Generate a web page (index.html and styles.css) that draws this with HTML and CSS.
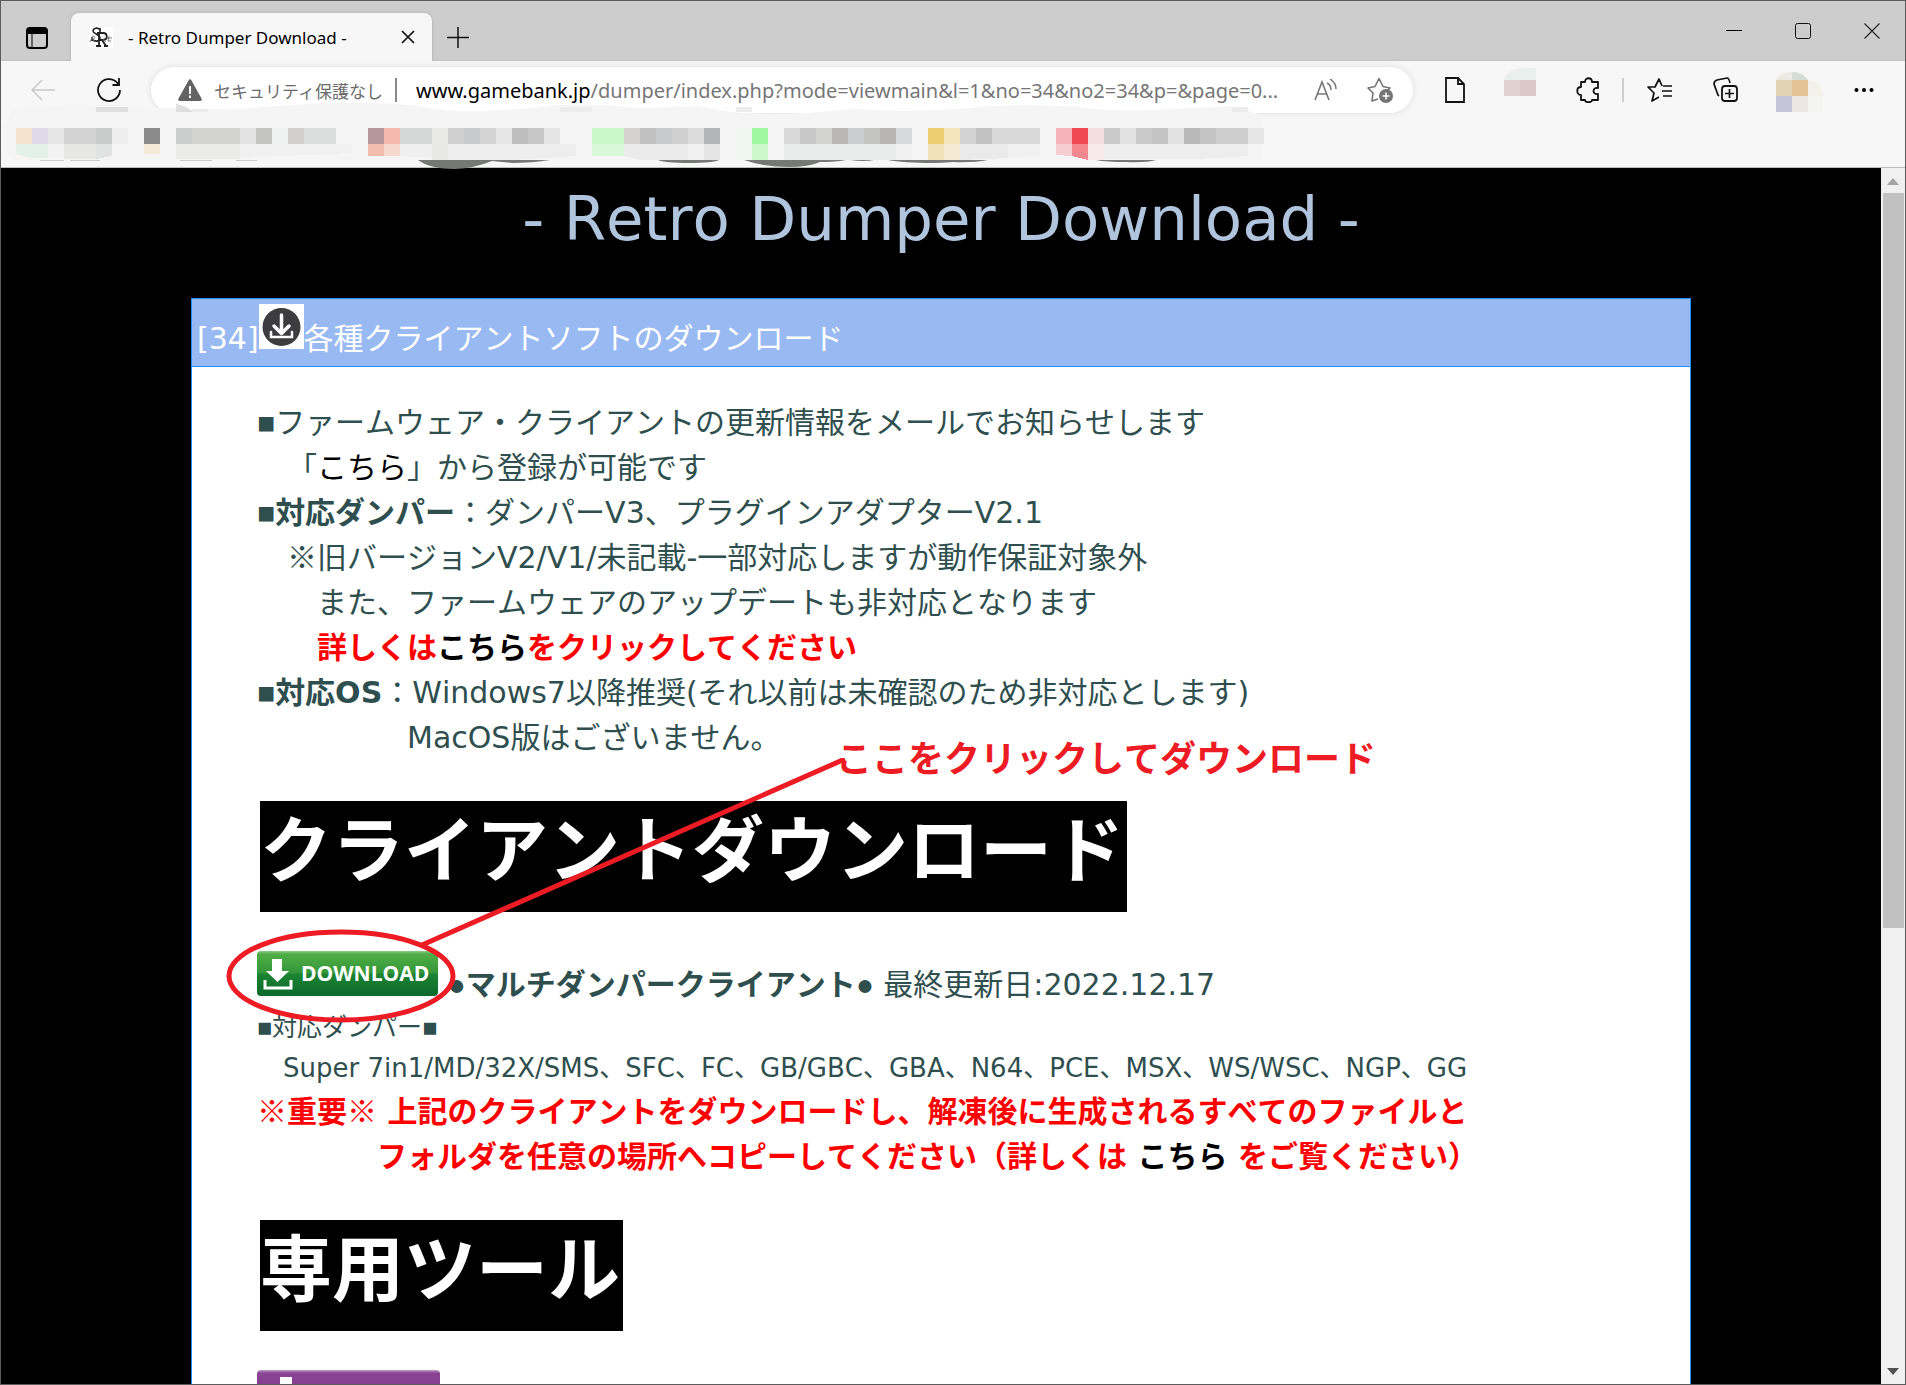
FILE: index.html
```html
<!DOCTYPE html>
<html lang="ja">
<head>
<meta charset="utf-8">
<meta name="viewport" content="width=device-width, initial-scale=1">
<title>- Retro Dumper Download -</title>
<link rel="stylesheet" href="styles.css">
</head>
<body>
<div class="window">
  <header class="chrome">
    <div class="tabstrip">
      <button class="icon-button tab-actions" aria-label="Tab actions">
        <svg width="22" height="22" viewBox="0 0 22 22"><rect x="1" y="1" width="20" height="20" rx="3" fill="none" stroke="#000" stroke-width="2"/><path d="M1 4a3 3 0 0 1 3-3h14a3 3 0 0 1 3 3v3H1z"/><path d="M6 7v14" stroke="#000" stroke-width="1"/></svg>
      </button>
      <div class="tab">
        <svg class="favicon" width="24" height="21" viewBox="0 0 24 21"><rect width="24" height="21" fill="#fff"/><g fill="none" stroke="#222"><path d="M11 3C9 0 4 1 4 4s7 3 7 7-6 4-8 1M11 1v4M3 10v4" stroke-width="1.600"/><path d="M10 6v13M8 6h6c5 0 5 7 0 7h-4M13 13l4 6M7 19h5M15 19h4" stroke-width="1.800"/><path d="M1 15l3-6c3 0 2 3 0 3l2 3M16 11c-2 0-2 4 1 3M20 9l-1 5h3M18 11h5" stroke="#777" stroke-width="1"/></g></svg>
        <span class="tab-title">- Retro Dumper Download -</span>
        <button class="icon-button" aria-label="Close tab"><svg width="14" height="14" viewBox="0 0 14 14"><path d="M1 1l12 12M13 1L1 13" stroke="#111" stroke-width="1.700"/></svg></button>
      </div>
      <button class="icon-button new-tab" aria-label="New tab"><svg width="22" height="22" viewBox="0 0 22 22"><path d="M11 0v21M0 10.500h22" stroke="#111" stroke-width="1.500"/></svg></button>
      <div class="window-controls">
        <button class="icon-button" aria-label="Minimize"><svg width="16" height="16" viewBox="0 0 16 16"><path d="M0 7.500h16" stroke="#000"/></svg></button>
        <button class="icon-button" aria-label="Maximize"><svg width="16" height="16" viewBox="0 0 16 16"><rect x=".5" y=".5" width="15" height="15" rx="2" fill="none" stroke="#111"/></svg></button>
        <button class="icon-button" aria-label="Close"><svg width="16" height="16" viewBox="0 0 16 16"><path d="M.5.5l15 15M15.500.5l-15 15" stroke="#222" stroke-width="1.100"/></svg></button>
      </div>
    </div>

    <div class="toolbar">
      <button class="icon-button back" aria-label="Back"><svg width="24" height="22" viewBox="0 0 24 22"><path d="M11 1L1 11l10 10M1 11h23" fill="none" stroke="#c9c9c9" stroke-width="1.500"/></svg></button>
      <button class="icon-button reload" aria-label="Reload"><svg width="26" height="26" viewBox="0 0 26 26"><path d="M24 13A11 11 0 1 1 21 5.500l2 2.500M16.500 8H23V1" fill="none" stroke="#111" stroke-width="1.800"/></svg></button>
      <div class="address">
        <svg width="24" height="22" viewBox="0 0 24 22"><path d="M10.500 1.500q1.500-2.500 3 0l10 18q1 2.500-1.500 2.500H2Q-.5 22 .5 19.500z" fill="#636363"/><path d="M12 7v8M12 16.500v2.500" stroke="#fff" stroke-width="2"/></svg>
        <span class="security">セキュリティ保護なし</span>
        <span class="address-divider"></span>
        <span class="url"><span class="host">www.gamebank.jp</span>/dumper/index.php?mode=viewmain&amp;l=1&amp;no=34&amp;no2=34&amp;p=&amp;page=0...</span>
        <button class="icon-button" aria-label="Read aloud"><svg width="24" height="22" viewBox="0 0 24 22"><path d="M1 21L8 3l7 18M3.500 15h9" fill="none" stroke="#757575" stroke-width="1.600"/><path d="M13 4q4 2 4 7M16 0q6 4 6 10" fill="none" stroke="#757575" stroke-width="1.500"/></svg></button>
        <button class="icon-button" aria-label="Add to favorites"><svg width="26" height="26" viewBox="0 0 26 26"><path d="M11 22l-6 2 1-8-5-5 7-1.500 4-8 4 8 7 1.500-3 3" fill="none" stroke="#757575" stroke-width="1.600" stroke-linejoin="round"/><circle cx="19" cy="19" r="7" fill="#757575"/><path d="M19 15.500v7M15.500 19h7" stroke="#fff" stroke-width="1.500"/></svg></button>
      </div>
      <div class="tools">
        <button class="icon-button" aria-label="Document"><svg width="22" height="26" viewBox="0 0 22 26"><path d="M2 1h12l6 6v18H2zM14 1v6h6" fill="none" stroke="#111" stroke-width="1.800"/></svg></button>
        <svg class="tile" width="32" height="44" viewBox="0 0 32 44"><path d="M0 12Q4 0 20 0h12v12z" fill="#e8efec"/><path fill="#e0d0ce" d="M0 12h16v16H0z"/><path fill="#dcc8c7" d="M16 12h16v16H16z"/></svg>
        <button class="icon-button" aria-label="Extensions"><svg width="24" height="26" viewBox="0 0 24 26"><path d="M5 5h4c0-5 7-5 7 0h6v6c-6-1-6 7 0 6v6h-6c0 3-7 3-7 0H5v-5c-5 0-5-8 0-8z" fill="none" stroke="#111" stroke-width="1.800" stroke-linejoin="round"/></svg></button>
        <span class="tool-divider"></span>
        <button class="icon-button" aria-label="Favorites"><svg width="26" height="24" viewBox="0 0 26 24"><path d="M12 19l-7 4 2-8-6-6h7l4-8 3 7M16 8h9M15 13h10M16 18h9" fill="none" stroke="#111" stroke-width="1.700" stroke-linejoin="round"/></svg></button>
        <button class="icon-button" aria-label="Collections"><svg width="26" height="26" viewBox="0 0 26 26"><path d="M6 19l-1-1L1 7q0-3 3-4l10-2q2 0 3 5" fill="none" stroke="#111" stroke-width="1.700"/><rect x="9" y="9" width="15" height="15" rx="3" fill="none" stroke="#111" stroke-width="1.800"/><path d="M16.500 12v9M12 16.500h9" stroke="#111" stroke-width="1.700"/></svg></button>
        <svg class="tile profile" width="48" height="44" viewBox="0 0 48 44"><path fill="#ebebe2" d="M0 12q4-8 16-8v8z"/><path fill="#d5ddd8" d="M16 4q10-1 16 8H16z"/><path fill="#e2d3b4" d="M0 12h16v16H0z"/><path fill="#e4c497" d="M16 12h16v16H16z"/><path fill="#f2f2ea" d="M32 12q14 0 15 16H32z"/><path fill="#c5c4d9" d="M0 28h16v16H0z"/><path fill="#ebe7e0" d="M16 28h16v16H16z"/><path fill="#f3f3f1" d="M32 28h14v16H32z"/></svg>
        <button class="icon-button" aria-label="Settings and more"><svg width="20" height="6" viewBox="0 0 20 6"><circle cx="2.500" cy="3" r="2"/><circle cx="10" cy="3" r="2"/><circle cx="17.500" cy="3" r="2"/></svg></button>
      </div>
    </div>

    <!-- Bookmarks, pixelated for privacy -->
    <svg class="bookmarks" width="1280" height="70" viewBox="0 100 1280 70" shape-rendering="crispEdges" aria-hidden="true">
      <path fill="#f5f5f5" shape-rendering="auto" d="M14 108Q60 102 150 107T260 107Q300 104 340 103T420 106Q440 112 480 111T560 105Q600 103 640 108L700 106Q730 114 770 114T850 109Q920 113 970 108T1080 107Q1110 112 1150 110T1230 106Q1250 110 1262 116V160H14Q0 150 1 130z"/>
      <g fill="#dfdfdf"><path d="M96 107h32v5H96zM176 104q12 2 16 8h-16z"/><path fill="#ececec" d="M192 109h16v3h-16zM560 107h32v5h-32zM736 107h16v5h-16zM1232 107h16v5h-16z"/></g>
      <g>
        <path fill="#f5e3d0" d="M16 128h16v16H16z"/><path fill="#dfd9e8" d="M32 128h16v16H32z"/><path fill="#e6e6e6" d="M48 128h16v16H48z"/><path fill="#d2d2d2" d="M64 128h32v16H64z"/><path fill="#c9cccb" d="M96 128h16v16H96z"/><path fill="#eee" d="M112 128h16v16h-16z"/>
        <path fill="#8a8a8a" d="M144 128h16v16h-16z"/><path fill="#cacdcc" d="M176 128h16v16h-16z"/><path fill="#d2d2d1" d="M192 128h48v16h-48z"/><path fill="#e3e3e3" d="M240 128h16v16h-16z"/><path fill="#c4c4c2" d="M256 128h16v16h-16z"/><path fill="#f0f2f1" d="M272 128h16v16h-16z"/><path fill="#d0cfcc" d="M288 128h16v16h-16z"/><path fill="#dcdddd" d="M304 128h32v16h-32z"/>
        <path fill="#b6989a" d="M368 128h16v16h-16z"/><path fill="#f4b9aa" d="M384 128h16v16h-16z"/><path fill="#d6d8d8" d="M400 128h32v16h-32z"/><path fill="#e9e9e6" d="M432 128h16v16h-16z"/><path fill="#d0d0d0" d="M448 128h16v16h-16z"/><path fill="#c9cacd" d="M464 128h16v16h-16z"/><path fill="#d4d4d4" d="M480 128h16v16h-16z"/><path fill="#e6e6e6" d="M496 128h16v16h-16z"/><path fill="#bebebe" d="M512 128h16v16h-16z"/><path fill="#c8c7c8" d="M528 128h16v16h-16z"/><path fill="#e4e4e4" d="M544 128h16v16h-16z"/>
        <path fill="#c8f7c8" d="M592 128h32v16h-32z"/><path fill="#d4d2ce" d="M624 128h16v16h-16z"/><path fill="#c0c0c0" d="M640 128h16v16h-16z"/><path fill="#c9cacd" d="M656 128h16v16h-16z"/><path fill="#d0d0d0" d="M672 128h16v16h-16z"/><path fill="#dcdcdc" d="M688 128h16v16h-16z"/><path fill="#b4b5b8" d="M704 128h16v16h-16z"/>
        <path fill="#eef6ef" d="M736 128h16v32h-16z"/><path fill="#a0f8a0" d="M752 128h16v16h-16z"/><path fill="#d8d8d8" d="M784 128h16v16h-16z"/><path fill="#c8c8c8" d="M800 128h16v16h-16z"/><path fill="#d3d3d0" d="M816 128h16v16h-16z"/><path fill="#b9b7b5" d="M832 128h16v16h-16z"/><path fill="#cbccce" d="M848 128h16v16h-16z"/><path fill="#c3c3c0" d="M864 128h16v16h-16z"/><path fill="#b9b5b3" d="M880 128h16v16h-16z"/><path fill="#d8d9db" d="M896 128h16v16h-16z"/>
        <path fill="#eccd70" d="M928 128h16v16h-16z"/><path fill="#f3e4be" d="M944 128h16v16h-16z"/><path fill="#d3d3d3" d="M960 128h16v16h-16z"/><path fill="#c2c2c2" d="M976 128h16v16h-16z"/><path fill="#d8d8d8" d="M992 128h48v16h-48z"/>
        <path fill="#f5b4ba" d="M1056 128h16v16h-16z"/><path fill="#ef4853" d="M1072 128h16v16h-16z"/><path fill="#f6dde0" d="M1088 128h16v16h-16z"/><path fill="#c9c9c9" d="M1104 128h16v16h-16zM1136 128h16v16h-16z"/><path fill="#e1e1e1" d="M1120 128h16v16h-16zM1168 128h16v16h-16z"/><path fill="#c3c3c3" d="M1152 128h16v16h-16zM1200 128h16v16h-16z"/><path fill="#b9b9b9" d="M1184 128h16v16h-16z"/><path fill="#cecece" d="M1216 128h32v16h-32z"/><path fill="#e6e6e6" d="M1248 128h16v16h-16z"/>
      </g>
      <g>
        <path fill="#e4f0ea" d="M16 144h32v14H32l-16-4z"/><path fill="#f2f2f2" d="M48 144h16v15H48z"/><path fill="#e6e6e3" d="M64 144h32v15H64z"/><path fill="#e0e3e2" d="M96 144h16v12l-16 3z"/><path fill="#f3e9d5" d="M144 144h16v10h-16z"/><path fill="#ebebe9" d="M176 144h64v15h-64z"/><path fill="#f0f0f0" d="M240 144h112v9l-112 5z"/>
        <path fill="#f3bdae" d="M368 144h16v12h-16z"/><path fill="#f6d8d0" d="M384 144h16v12h-16z"/><path fill="#efefef" d="M400 144h32v14l-32-2z"/><path fill="#e8e8e4" d="M432 144h16v16h-16z"/><path fill="#ededed" d="M448 144h128v12l-64 4h-64z"/>
        <path fill="#d8f6d8" d="M592 144h32v12h-32z"/><path fill="#ebebeb" d="M624 144h64v16h-48l-16-4z"/><path fill="#f0f0f0" d="M688 144h16v16h-16z"/><path fill="#e4e4e4" d="M704 144h16v16h-16z"/><path fill="#ccf8cc" d="M752 144h16v16h-16z"/><path fill="#e9ebeb" d="M784 144h112v16H784z"/><path fill="#f1f1f1" d="M896 144h16v16h-16z"/>
        <path fill="#f1e2ba" d="M928 144h16v16h-16z"/><path fill="#f3ead4" d="M944 144h16v16h-16z"/><path fill="#eaeaea" d="M960 144h48v14l-48 2z"/><path fill="#f0f0f0" d="M1008 144h32v13l-32 1z"/><path fill="#f6cdd1" d="M1056 144h16v12l-16-1z"/><path fill="#f3878f" d="M1072 144h16v16l-16-4z"/><path fill="#f8e9eb" d="M1088 144h16v16h-16z"/><path fill="#ededed" d="M1104 144h144v12l-50 3h-94z"/>
      </g>
      <g fill="#767876" shape-rendering="auto"><path d="M418 160Q430 169 455 169Q475 168 492 161l20 2q20 0 38-3zM658 160h61q-5 3-30 3-25 0-31-3zM744 160q20 7 45 7 20 0 31-5 15 0 26-2zM850 160h24q-10 2-24 0zM888 160h100q-15 3-35 2-10 1-20 1-30 0-45-3zM1096 160h60q-10 3-30 2-20 0-30-2z"/><path fill="#ccc" d="M40 160h24v1H40zM70 160h30v1H70zM180 160h32v1h-32zM236 160h21v1h-21z"/></g>
    </svg>
  </header>

  <div class="viewport">
    <main class="page">
      <h1 class="page-title">- Retro Dumper Download -</h1>
      <article class="panel">
        <div class="panel-header">[34]<svg width="45" height="45" viewBox="0 0 45 45"><rect width="45" height="45" fill="#fff"/><circle cx="22.500" cy="23" r="19" fill="#3d3d40"/><path d="M22.500 11v17M15 22l7.500 7.500L30 22" fill="none" stroke="#fff" stroke-width="3.500" stroke-linecap="round" stroke-linejoin="round"/><path d="M12 28v5h21v-5" fill="none" stroke="#fff" stroke-width="2.500" stroke-linecap="round"/></svg>各種クライアントソフトのダウンロード</div>
        <div class="panel-body">
          <section class="notes">
            <p><span class="mark">■</span>ファームウェア・クライアントの更新情報をメールでお知らせします</p>
            <p>　「<a href="#register">こちら</a>」から登録が可能です</p>
            <p><b><span class="mark">■</span>対応ダンパー</b>：ダンパーV3、プラグインアダプターV2.1</p>
            <p>　<span class="jp">※</span>旧バージョンV2/V1/未記載-一部対応しますが動作保証対象外</p>
            <p>　　また、ファームウェアのアップデートも非対応となります</p>
            <p class="warning">　　詳しくは<a href="#details">こちら</a>をクリックしてください</p>
            <p><b><span class="mark">■</span>対応OS</b>：Windows7以降推奨(それ以前は未確認のため非対応とします)</p>
            <p>　　　　　MacOS版はございません。</p>
          </section>

          <h2 class="section-title">クライアントダウンロード</h2>
          <section class="client">
            <div class="client-row">
              <a class="download" href="#client" aria-label="DOWNLOAD"><svg width="30" height="32" viewBox="0 0 30 32"><path d="M9 1h10v12h7L14.500 24 3 13h6z" fill="#fff"/><path d="M2 22v8h26v-8" fill="none" stroke="#fff" stroke-width="3"/></svg><span>DOWNLOAD</span></a>
              <b><span class="mark">●</span>マルチダンパークライアント<span class="mark">●</span></b> 最終更新日:2022.12.17
              <div class="callout">
                <svg width="624" height="270" viewBox="0 0 624 270" aria-hidden="true"><g fill="none" stroke="#ed1c24" stroke-width="5"><ellipse cx="115" cy="218" rx="112" ry="44"/><path d="M196 187L619 1"/></g></svg>
                <strong>ここをクリックしてダウンロード</strong>
              </div>
            </div>
            <p class="small"><span class="mark">■</span>対応ダンパー<span class="mark">■</span></p>
            <p class="small models">　Super 7in1/MD/32X/SMS、SFC、FC、GB/GBC、GBA、N64、PCE、MSX、WS/WSC、NGP、GG</p>
            <p class="warning"><span class="jp">※</span>重要<span class="jp">※</span> 上記のクライアントをダウンロードし、解凍後に生成されるすべてのファイルと</p>
            <p class="warning">　　　　フォルダを任意の場所へコピーしてください（詳しくは <a href="#readme">こちら</a> をご覧ください）</p>
          </section>

          <h2 class="section-title">専用ツール</h2>
          <a class="download download-tool" href="#tools" aria-label="Tools"><svg width="30" height="32" viewBox="0 0 30 32"><path d="M9 1h12v12h7L15 24 3 13h6z" fill="#fff"/></svg></a>
        </div>
      </article>
    </main>
    <div class="scrollbar" aria-hidden="true">
      <svg width="12" height="7" viewBox="0 0 12 7"><path d="M6 0l6 7H0z" fill="#a3a3a3"/></svg>
      <div class="track"><div class="thumb"></div></div>
      <svg width="12" height="7" viewBox="0 0 12 7"><path d="M0 0h12L6 7z" fill="#505050"/></svg>
    </div>
  </div>
</div>
</body>
</html>
```

FILE: styles.css
```css
* { box-sizing: border-box; }

body {
  margin: 0;
  font-family: "DejaVu Sans", "Noto Sans CJK JP", sans-serif;
  text-spacing-trim: space-all;
}

h1, h2, p { margin: 0; }

svg { flex: none; }

.window {
  display: flex;
  flex-direction: column;
  height: 100vh;
  border: 1px solid #5c5c5c;
  overflow: hidden;
}

/* Browser chrome */
.chrome {
  position: relative;
  flex: none;
  height: 167px;
  background: #f7f7f7;
  border-bottom: 1px solid #bdbdbd;
  font-family: "Noto Sans", "Noto Sans CJK JP", sans-serif;
}

.icon-button {
  display: flex;
  align-items: center;
  justify-content: center;
  flex: none;
  padding: 0;
  border: 0;
  background: none;
}

.tabstrip {
  display: flex;
  align-items: center;
  height: 60px;
  padding-left: 25px;
  background: linear-gradient(#cdcdcd 58px, #c0c0c0 60px);
}

.tab {
  display: flex;
  align-items: center;
  align-self: flex-end;
  gap: 15px;
  width: 361px;
  height: 48px;
  margin-left: 23px;
  padding: 0 17px 0 18px;
  border-radius: 8px 8px 0 0;
  background: #f7f7f7;
  box-shadow: 0 0 3px #aaa;
  clip-path: inset(-4px -4px 0 -4px);
}

.tab-actions { padding-top: 14px; }

.tab-title {
  flex: 1;
  font-size: 17px;
  white-space: nowrap;
}

.new-tab { margin: 14px 0 0 15px; }

.window-controls {
  display: flex;
  gap: 53px;
  margin-left: auto;
  padding-right: 25px;
}

.toolbar {
  display: flex;
  align-items: center;
  height: 58px;
  padding-left: 30px;
}

.reload { margin-left: 41px; }

.address {
  display: flex;
  align-items: center;
  flex: 1;
  min-width: 0;
  height: 46px;
  margin-left: 29px;
  padding: 0 20px 0 27px;
  border-radius: 23px;
  background: #fff;
  box-shadow: 0 0 6px #ddd;
}

.security {
  margin-left: 12px;
  font-size: 17px;
  color: #6b6b6b;
  white-space: nowrap;
}

.address-divider {
  width: 2px;
  height: 24px;
  margin: 0 19px 0 12px;
  background: #8a8a8a;
}

.url {
  flex: 1;
  min-width: 0;
  overflow: hidden;
  font-size: 20px;
  color: #767676;
  white-space: nowrap;
}

.host { color: #000; }

.address .icon-button { margin-left: 19px; }
.address .icon-button + .icon-button { margin-left: 29px; }

.tools {
  display: flex;
  align-items: center;
  margin-left: 31px;
  padding-right: 31px;
}

.tile { margin: 0 40px 0 38px; }
.profile { margin: 0 30px 0 37px; }

.tool-divider {
  width: 2px;
  height: 24px;
  margin: 0 23px 0 22px;
  background: #cfcfcf;
}

.tools .tool-divider + .icon-button { margin-right: 40px; }

.bookmarks {
  position: absolute;
  top: 99px;
  left: -1px;
  z-index: 1;
}

/* Page */
.viewport {
  display: flex;
  flex: 1;
  min-height: 0;
  background: #000;
}

.page {
  flex: 1;
  min-width: 0;
  padding-top: 6px;
  overflow: hidden;
  font-kerning: none;
}

.page-title {
  font-size: 61px;
  font-weight: 400;
  line-height: 90px;
  text-align: center;
  color: #b0c4de;
}

.panel {
  max-width: 1500px;
  margin: 34px auto 0;
  border: 1px solid #1e90ff;
  background: #fff;
  color: #2f4f4f;
  font-size: 30px;
  line-height: 45px;
  white-space: nowrap;
}

.panel-header {
  padding: 5px;
  border-bottom: 1px solid #1e90ff;
  background: #98b9f2;
  color: #fff;
}

.panel-header svg { vertical-align: baseline; }

.panel-body {
  padding: 33px 65px 60px;
}

.panel a { color: #000; text-decoration: none; }

.mark,
.jp { line-height: 1; }

.mark { font-family: "Liberation Sans", sans-serif; }
.jp { font-family: "Noto Sans CJK JP", sans-serif; }

.warning {
  color: #f00;
  font-weight: 700;
}

.section-title {
  width: fit-content;
  margin: 41px 0 39px 3px;
  padding: 0 3px 11px 0;
  background: #000;
  color: #fff;
  font-size: 72px;
  font-weight: 700;
  line-height: 100px;
}

.client-row { position: relative; }

.small {
  font-size: 25px;
  line-height: 41px;
}

.models { font-size: 26px; }

.panel .download {
  display: inline-flex;
  align-items: center;
  gap: 8px;
  width: 181px;
  height: 45px;
  padding-left: 6px;
  border-radius: 4px;
  background: linear-gradient(#8fc98a, #4fae45 3px, #35963a 22px, #1d8433 23px, #0b692c);
  color: #fff;
  font-family: "Open Sans", sans-serif;
  font-size: 21px;
  font-weight: 700;
  vertical-align: bottom;
}

.panel .client-row .download { vertical-align: 5px; }

.panel .download-tool {
  width: 183px;
  padding-left: 14px;
  background: linear-gradient(#c0a0c6, #894593 3px, #7a3585);
}

/* Red pen annotation drawn over the client download row */
.callout {
  position: absolute;
  top: -193px;
  left: -31px;
}

.callout svg { display: block; }

.callout strong {
  position: absolute;
  top: -21px;
  left: 610px;
  color: #ed1c24;
  font-size: 36px;
}

.scrollbar {
  display: flex;
  flex-direction: column;
  align-items: center;
  flex: none;
  width: 24px;
  padding: 10px 0 9px;
  background: #f0f0f0;
}

.track {
  flex: 1;
  width: 21px;
  padding: 8px 0;
}

.thumb {
  height: 63%;
  background: #c1c1c1;
}
```
